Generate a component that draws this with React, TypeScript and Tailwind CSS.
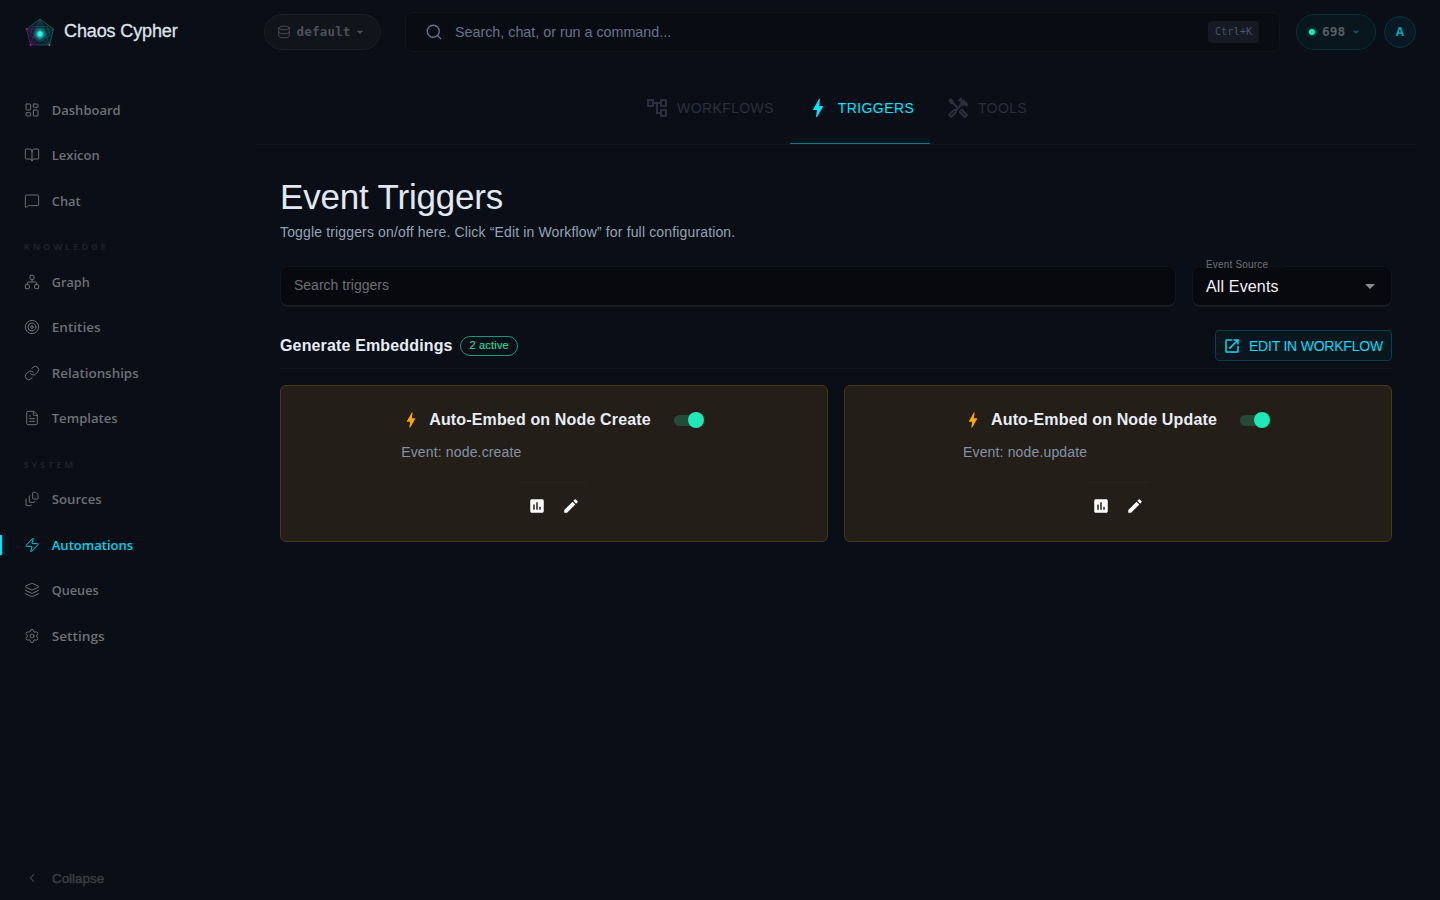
import React from 'react';
import {
  LayoutDashboard, BookOpen, MessageSquare, Network, Target, FileText, FileStack, Zap, Layers,
  Settings, Search, Database, ChevronLeft, Link,
} from 'lucide-react';
import { MdBolt, MdOutlineAccountTree, MdOutlineHandyman, MdAssessment, MdEdit, MdOpenInNew, MdArrowDropDown } from 'react-icons/md';

function Logo() {
  return (
    <svg width="32" height="32" viewBox="0 0 32 32" fill="none">
      <defs>
        <radialGradient id="core">
          <stop offset="0" stopColor="#4dffec" />
          <stop offset=".35" stopColor="#1fd9cd" stopOpacity=".85" />
          <stop offset="1" stopColor="#0b7c7c" stopOpacity="0" />
        </radialGradient>
        <linearGradient id="edge" x1="2" y1="22" x2="30" y2="14" gradientUnits="userSpaceOnUse">
          <stop offset="0" stopColor="#a0188c" />
          <stop offset=".45" stopColor="#2b7f9c" />
          <stop offset="1" stopColor="#189f86" />
        </linearGradient>
        <linearGradient id="fill" x1="2" y1="22" x2="30" y2="14" gradientUnits="userSpaceOnUse">
          <stop offset="0" stopColor="#2c1138" />
          <stop offset=".5" stopColor="#0c2c3a" />
          <stop offset="1" stopColor="#0b2c30" />
        </linearGradient>
      </defs>
      <path d="M16 3 29.500 13 25.500 29H6.500L2.500 13Z" fill="url(#fill)" opacity=".7" />
      <g stroke="url(#edge)" strokeWidth=".7" opacity=".7">
        <path d="M16 3 29.500 13 25.500 29H6.500L2.500 13Z" />
        <path d="M16 3 25.500 29 2.500 13H29.500L6.500 29Z" opacity=".6" />
        <path d="M16 3V26M9 10.500H23L26 19 16 26 6 19Z" opacity=".6" />
      </g>
      <circle cx="16" cy="18" r="7.500" fill="url(#core)" />
      <circle cx="16" cy="18" r="2.500" fill="#35f5e0" opacity=".8" />
      <circle cx="2.500" cy="13" r=".9" fill="#a3129a" />
      <circle cx="6.500" cy="29" r=".9" fill="#c012b0" />
      <circle cx="25.500" cy="29" r=".9" fill="#17a98a" />
    </svg>
  );
}

type Item = { label: string; Icon: React.ElementType; active?: boolean; width: string };

function NavItem({ label, Icon, active, width }: Item) {
  return (
    <div className={`relative flex h-[45.500px] items-center pl-6 ${active ? 'text-[#00d3e8]' : 'text-[#6d7075]'}`}>
      {active && <span className="absolute left-0 top-[13px] h-5 w-[2px] bg-[#00e5ff] shadow-[0_0_8px_rgba(0,229,255,0.4)]" />}
      <Icon size={16} strokeWidth={1.5} className="mr-3 shrink-0" />
      <svg className="h-5 overflow-visible" width="100" height="20">
        <text x="-0.300" y="15" textLength={width} lengthAdjust="spacingAndGlyphs" fill="currentColor" className="font-['Open_Sans',sans-serif] text-[13.300px] font-semibold">{label}</text>
      </svg>
    </div>
  );
}

function Heading({ children }: { children: React.ReactNode }) {
  return <div className="flex h-[35.500px] items-center pl-[23.500px] pt-[12px] font-['Open_Sans',sans-serif] text-[9.500px] font-bold tracking-[2.700px] text-[#1d222b]">{children}</div>;
}

function Card({ title, event }: { title: string; event: string }) {
  return (
    <div className="flex h-[157px] flex-col items-center rounded-[6px] border border-[#4a3612] bg-[#231e17] pt-[22px]">
      <div className="flex flex-col">
        <div className="flex h-6 items-center">
          <MdBolt size={20} className="mr-2 text-[#ffa800]" />
          <h3 className="text-base font-bold tracking-[0.150px] text-[#e8edf5]">{title}</h3>
          <span className="ml-[23px] mr-[3px] flex w-[30px] items-center">
            <span className="h-[11px] w-[26px] rounded-full bg-[#244b38]" />
            <span className="-ml-3 h-4 w-4 shrink-0 rounded-full bg-[#1de9b6]" />
          </span>
        </div>
        <p className="mt-[10px] text-sm leading-5 tracking-[0.150px] text-[#8592a8]">Event: {event}</p>
      </div>
      <div className="mt-5 flex h-[47px] w-16 items-center justify-between border-t border-[#29241e] px-[6px] text-white">
        <MdAssessment size={18} className="shrink-0" />
        <MdEdit size={18} className="shrink-0" />
      </div>
    </div>
  );
}

export default function App() {
  return (
    <div className="flex h-[900px] w-[1440px] flex-col overflow-hidden bg-[#0a0e16] font-['Liberation_Sans',sans-serif]">
      <header className="flex h-16 shrink-0 items-center">
        <div className="flex w-[264px] items-center pl-6">
          <Logo />
          <span className="ml-2 pb-[2px] text-lg tracking-[-0.120px] text-[#dfe3ea] [-webkit-text-stroke:0.3px_#dfe3ea]">Chaos Cypher</span>
        </div>
        <div className="flex h-9 w-[117px] items-center rounded-full border border-[#1b1f27] bg-[#10141b] pl-3 text-[#4c5057]">
          <Database size={14} strokeWidth={1.5} />
          <span className="ml-[5.500px] font-['DejaVu_Sans_Mono',monospace] text-[12.500px] font-bold tracking-[0.200px]">default</span>
          <MdArrowDropDown size={16} className="ml-[1px]" />
        </div>
        <div className="ml-6 flex h-10 w-[875px] items-center rounded-lg border border-[#11151d] bg-[#0a0c14] pl-[19px] pr-5 text-[#64748b]">
          <Search size={18} strokeWidth={1.8} />
          <span className="ml-3 pt-[1px] text-[14.300px]">Search, chat, or run a command...</span>
          <kbd className="ml-auto flex h-[22px] w-[51px] items-center justify-center rounded bg-[#171a23] font-['DejaVu_Sans_Mono',monospace] text-[10.300px] text-[#475569]">Ctrl+K</kbd>
        </div>
        <div className="ml-4 flex h-9 w-20 items-center rounded-full border border-[#0b2e38] bg-[#0a161d] pl-3">
          <span className="h-[6px] w-[6px] rounded-full bg-[#1de9b6] shadow-[0_0_4px_rgba(29,233,182,0.6)]" />
          <span className="ml-[7px] font-['DejaVu_Sans_Mono',monospace] text-[12.800px] font-bold text-[#595e61]">698</span>
          <MdArrowDropDown size={16} className="ml-[3px] text-[#0c5462]" />
        </div>
        <div className="ml-2 flex h-8 w-8 items-center justify-center rounded-full border border-[#083541] bg-[#091923] font-['Open_Sans',sans-serif] text-xs font-bold text-[#03a5b8]">A</div>
      </header>
      <div className="flex min-h-0 flex-1">
        <aside className="flex w-64 shrink-0 flex-col pt-[23px]">
          <NavItem label="Dashboard" Icon={LayoutDashboard} width="69" />
          <NavItem label="Lexicon" Icon={BookOpen} width="48" />
          <NavItem label="Chat" Icon={MessageSquare} width="29" />
          <Heading>KNOWLEDGE</Heading>
          <NavItem label="Graph" Icon={Network} width="38" />
          <NavItem label="Entities" Icon={Target} width="49" />
          <NavItem label="Relationships" Icon={Link} width="87" />
          <NavItem label="Templates" Icon={FileText} width="66" />
          <Heading>SYSTEM</Heading>
          <NavItem label="Sources" Icon={FileStack} width="50" />
          <NavItem label="Automations" Icon={Zap} active width="81.500" />
          <NavItem label="Queues" Icon={Layers} width="47" />
          <NavItem label="Settings" Icon={Settings} width="53" />
          <div className="mb-3 mt-auto flex h-5 items-center pl-6 text-[#393c43]">
            <ChevronLeft size={14} className="ml-[1px] mr-[13px]" />
            <span className="pt-[2px] text-[13.400px] [-webkit-text-stroke:0.5px_#393c43]">Collapse</span>
          </div>
        </aside>
        <main className="w-[1160px]">
          <nav className="flex h-[81px] justify-center border-b border-[#11151c] text-sm tracking-[0.400px]">
            <div className="flex w-[160px] items-center justify-center pt-2 text-[#2a303d]"><MdOutlineAccountTree size={24} className="mr-2" />WORKFLOWS</div>
            <div className="flex w-[140px] items-center justify-center border-b border-[#087987] bg-linear-to-t from-[#0a161e] to-transparent to-10% pl-[1px] pt-[9px] text-[#00e5ff]"><MdBolt size={24} className="mr-2" />TRIGGERS</div>
            <div className="flex w-[113px] items-center justify-center pl-[1px] pt-2 text-[#2a303d]"><MdOutlineHandyman size={24} className="mr-2" />TOOLS</div>
          </nav>
          <section className="px-6 pt-[31px]">
            <h1 className="text-[35px] leading-[42px] tracking-[-0.180px] text-[#e2e8f0]">Event Triggers</h1>
            <p className="mt-1 text-sm leading-5 tracking-[0.150px] text-[#94a3b8]">Toggle triggers on/off here. Click “Edit in Workflow” for full configuration.</p>
            <div className="mt-6 flex gap-4">
              <div className="flex h-[41px] w-[896px] items-center rounded-lg border border-b-2 border-[#11141c] border-b-[#191d25] bg-[#07090f] px-[13px] pb-[2px] text-sm text-[#6c6e72]">Search triggers</div>
              <div className="relative flex h-[41px] w-[200px] items-center justify-between rounded-lg border border-b-2 border-[#11141c] border-b-[#191d25] bg-[#07090f] pl-[13px] pr-[9px] text-[#f0f2f5]">
                <span className="absolute left-2 top-[-8px] h-[9px] w-[84px] bg-[#0a0e16] pl-[5px] text-[10px] leading-3 tracking-[0.180px] text-[#6c7178]">Event Source</span>
                <span className="pt-[1px] tracking-[0.150px]">All Events</span>
                <MdArrowDropDown size={24} className="text-[#8a8b8e]" />
              </div>
            </div>
            <div className="mt-[23px] flex h-[39px] items-start border-b border-[#11151c]">
              <h2 className="mt-1 text-base font-bold tracking-[0.150px] text-[#e8edf5]">Generate Embeddings</h2>
              <span className="ml-[7.500px] mt-[6px] flex h-5 w-[58px] items-center justify-center rounded-full border border-[#149a7e] pb-[1px] text-[11px] tracking-[0.200px] text-[#1de9a6]">2 active</span>
              <button className="ml-auto flex h-[31px] w-[177px] items-center whitespace-nowrap rounded border border-[#083f4b] bg-[#09161d] pl-[7px] text-[14px] tracking-[-0.220px] text-[#00dff8]"><MdOpenInNew size={18} className="mr-2 shrink-0" /><span className="pt-[1px]">EDIT IN WORKFLOW</span></button>
            </div>
            <div className="mt-4 grid grid-cols-2 gap-4">
              <Card title="Auto-Embed on Node Create" event="node.create" />
              <Card title="Auto-Embed on Node Update" event="node.update" />
            </div>
          </section>
        </main>
      </div>
    </div>
  );
}
